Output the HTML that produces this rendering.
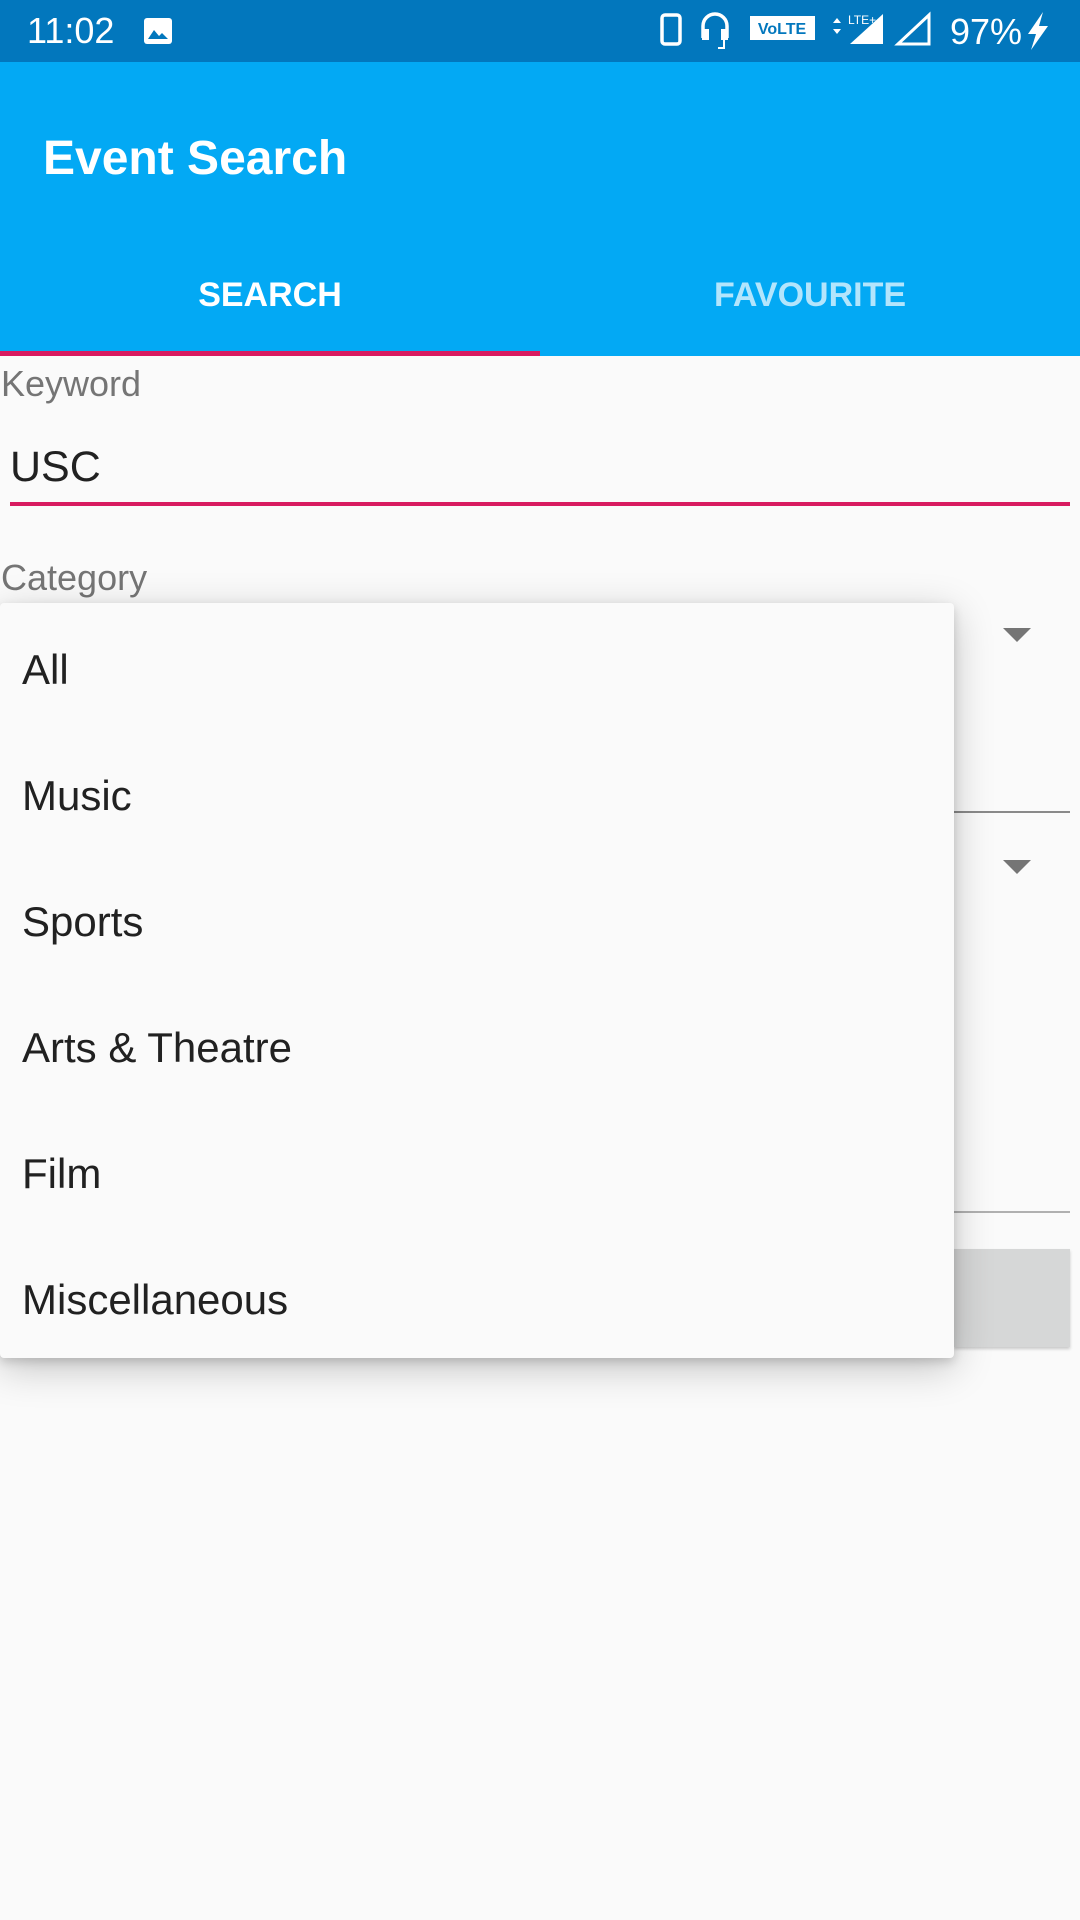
<!DOCTYPE html>
<html><head><meta charset="utf-8"><style>
*{margin:0;padding:0;box-sizing:border-box}
body{width:1080px;height:1920px;background:#fafafa;font-family:"Liberation Sans",Roboto,sans-serif;position:relative;overflow:hidden}
.abs{position:absolute}
.item{position:absolute;left:22px;font-size:42px;color:#212121}
</style></head><body>
<div class="abs" style="left:0;top:0;width:1080px;height:62px;background:#0277bd"></div>
<div class="abs" style="left:27px;top:10px;font-size:36px;color:#fff">11:02</div>
<svg class="abs" style="left:143px;top:17px" width="30" height="28" viewBox="0 0 30 28"><rect x="1" y="1" width="28" height="26" rx="3" fill="#fff"/><path d="M5 22 L11 13 L16 19 L19 16 L25 22Z" fill="#0277bd"/></svg>
<svg class="abs" style="left:640px;top:0" width="440" height="62" viewBox="0 0 440 62">
<rect x="22" y="15" width="18" height="29" rx="3" fill="none" stroke="#fff" stroke-width="3.5"/>
<path d="M63 38 v-12 a12 12 0 0 1 24 0 v12" fill="none" stroke="#fff" stroke-width="3.5"/>
<rect x="62" y="29" width="7" height="11" fill="#fff"/><rect x="81" y="29" width="7" height="11" fill="#fff"/><path d="M84 40 v8 h-6" fill="none" stroke="#fff" stroke-width="2"/>
<rect x="110" y="16" width="65" height="24" fill="#fff"/>
<text x="142" y="34" font-size="16" font-weight="bold" fill="#0277bd" text-anchor="middle" font-family="Liberation Sans">VoLTE</text>
<path d="M193 23 l4 -5 l4 5z M193 29 l4 5 l4 -5z" fill="#fff"/>
<text x="208" y="24" font-size="12" fill="#fff" font-family="Liberation Sans">LTE+</text>
<path d="M243 14 V44 H210Z" fill="#fff"/>
<path d="M289 15 V44 H258Z" fill="none" stroke="#fff" stroke-width="3"/>
<text x="310" y="44" font-size="36" fill="#fff" font-family="Liberation Sans">97%</text>
<path d="M403 12 L388 34 H396 L391 50 L408 26 H399Z" fill="#fff"/>
</svg>
<div class="abs" style="left:0;top:62px;width:1080px;height:294px;background:#03a9f4"></div>
<div class="abs" style="left:43px;top:131px;font-size:48px;font-weight:bold;color:#fff">Event Search</div>
<div class="abs" style="left:0;top:276px;width:540px;text-align:center;font-size:34px;font-weight:bold;color:#fff">SEARCH</div>
<div class="abs" style="left:540px;top:276px;width:540px;text-align:center;font-size:34px;font-weight:bold;color:#b3e5fc">FAVOURITE</div>
<div class="abs" style="left:0;top:351px;width:540px;height:5px;background:#d81b60"></div>
<div class="abs" style="left:1px;top:363px;font-size:36px;color:#757575">Keyword</div>
<div class="abs" style="left:10px;top:443px;font-size:43px;color:#212121">USC</div>
<div class="abs" style="left:10px;top:502px;width:1060px;height:4px;background:#d81b60"></div>
<div class="abs" style="left:1px;top:557px;font-size:36px;color:#757575">Category</div>
<svg class="abs" style="left:1003px;top:628px" width="28" height="14"><path d="M0 0H28L14 14Z" fill="#757575"/></svg>
<svg class="abs" style="left:1003px;top:860px" width="28" height="14"><path d="M0 0H28L14 14Z" fill="#757575"/></svg>
<div class="abs" style="left:954px;top:811px;width:116px;height:2px;background:#8a8a8a"></div>
<div class="abs" style="left:954px;top:1211px;width:116px;height:2px;background:#b0b0b0"></div>
<div class="abs" style="left:954px;top:1249px;width:116px;height:98px;background:#d6d7d7;box-shadow:0 2px 3px rgba(0,0,0,.2)"></div>
<div class="abs" style="left:0;top:603px;width:954px;height:755px;background:#fafafa;border-radius:4px;box-shadow:0 10px 40px rgba(0,0,0,.22),0 4px 10px rgba(0,0,0,.15)">
<div class="item" style="top:43px">All</div>
<div class="item" style="top:169px">Music</div>
<div class="item" style="top:295px">Sports</div>
<div class="item" style="top:421px">Arts &amp; Theatre</div>
<div class="item" style="top:547px">Film</div>
<div class="item" style="top:673px">Miscellaneous</div>
</div>
</body></html>
